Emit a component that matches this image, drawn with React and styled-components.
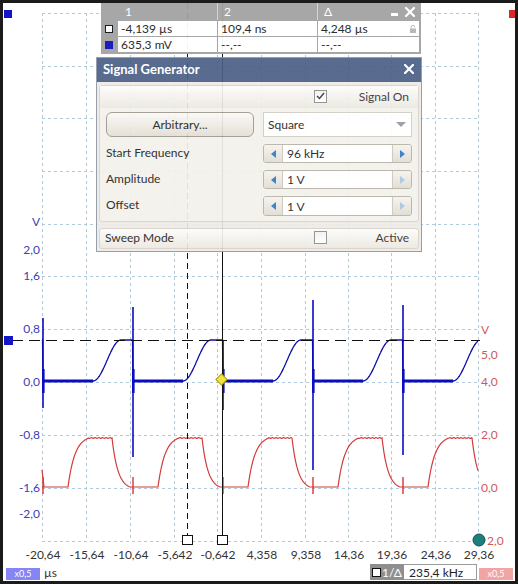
import React from "react";
import styled, { createGlobalStyle } from "styled-components";

const FONT = `Lato, "Open Sans", "Noto Sans", sans-serif`;

const GlobalStyle = createGlobalStyle`
  html, body {
    margin: 0;
    padding: 0;
    background: #fff;
  }
  body {
    font-family: ${FONT};
  }
`;

/* ---------- chart data ---------- */

const GX = [42, 86, 130, 174, 217, 261, 305, 348, 391, 435, 478];
const GY = [13, 66, 118, 171, 224, 276, 329, 382, 435, 488, 541];
const TIME = ["-20,64", "-15,64", "-10,64", "-5,642", "-0,642", "4,358", "9,358", "14,36", "19,36", "24,36", "29,36"];

const BLUE_LABELS = [
  ["V", 222], ["2,0", 250], ["1,6", 276], ["0,8", 329],
  ["0,0", 382], ["-0,8", 435], ["-1,6", 488], ["-2,0", 514],
];
const RED_LABELS = [["V", 330], ["5,0", 355], ["4,0", 382], ["2,0", 435], ["0,0", 488]];

const PERIOD = 90;
const FIRST = 43;
const SPIKES = [
  { x: 43, top: 318, bottom: 408 },
  { x: 133, top: 307, bottom: 457 },
  { x: 223, top: 340, bottom: 410 },
  { x: 313, top: 300, bottom: 470 },
  { x: 403, top: 305, bottom: 455 },
];

const phase = (x) => (((x - FIRST) % PERIOD) + PERIOD) % PERIOD;
const charge = (t) => (1 - Math.exp(-3 * t)) / (1 - Math.exp(-3));

function blueY(x) {
  const p = phase(x);
  if (p < 50) return 381;
  if (p < 78) {
    const t = (p - 50) / 28;
    return 381 - 41 * (0.5 - 0.5 * Math.cos(Math.PI * t));
  }
  return 340;
}

function redY(x) {
  const p = phase(x);
  if (p < 25) return 487;
  if (p < 46) return 487 - 49 * charge((p - 25) / 21);
  if (p < 69) return 438 + Math.sin(x * 1.7) * 0.4;
  if (p < 87) return 438 + 49 * charge((p - 69) / 18);
  return 487;
}

function trace(fn, from, to) {
  let d = "";
  for (let x = from; x <= to; x += 0.5) {
    d += (d ? " L" : "M") + x.toFixed(1) + " " + fn(x).toFixed(1);
  }
  return d;
}

/* ---------- layout ---------- */

const Frame = styled.div`
  position: relative;
  width: 518px;
  height: 584px;
  box-sizing: border-box;
  border: 3px solid #1b1b1b;
  background: #fff;
  display: flex;
  flex-direction: column;
  overflow: hidden;
  font-family: ${FONT};
  font-size: 12px;
  color: #222;
`;

const Plot = styled.svg`
  display: block;
  flex: none;
  font-family: ${FONT};
  font-size: 12px;
`;

const BottomBar = styled.div`
  flex: 1;
  display: flex;
  align-items: center;
  padding: 0 2px 0 3px;
`;

const ScaleBadge = styled.div`
  width: 34px;
  height: 12px;
  margin-top: 3px;
  display: flex;
  align-items: center;
  justify-content: center;
  font-size: 9px;
  color: #fff;
  background: ${(p) => (p.$red ? "#f2a4a4" : "#8585f5")};
`;

const Unit = styled.span`
  margin-left: 4px;
  font-size: 12px;
  color: #333;
`;

const Spacer = styled.div`
  flex: 1;
`;

const FreqLabel = styled.div`
  width: 34px;
  height: 16px;
  display: flex;
  align-items: center;
  justify-content: center;
  gap: 1px;
  background: #8f8f8f;
  color: #fff;
  font-size: 12px;

  i {
    width: 7px;
    height: 7px;
    border: 1px solid #111;
    background: #fff;
  }
`;

const FreqValue = styled.div`
  width: 73px;
  height: 16px;
  box-sizing: border-box;
  border: 1px solid #9a9a9a;
  border-left: none;
  padding-left: 5px;
  display: flex;
  align-items: center;
  font-size: 12px;
  margin-right: 2px;
`;

/* ---------- measurement table ---------- */

const Table = styled.div`
  position: absolute;
  left: 98px;
  top: 0;
  width: 320px;
  box-sizing: border-box;
  padding: 0 2px 2px 0;
  background: #a3a3a3;
  display: grid;
  grid-template-columns: 16px 99px 99px 1fr;
  grid-template-rows: 17px 15px 15px;
  gap: 1px;
  opacity: 0.95;
  font-size: 12px;
`;

const HeadCell = styled.div`
  display: flex;
  align-items: center;
  padding-left: ${(p) => (p.$pad ? p.$pad : 6)}px;
  color: #fff;
  border-left: ${(p) => (p.$sep ? "1px solid #d2d2d2" : "none")};
  margin-left: ${(p) => (p.$sep ? "-1px" : "0")};
`;

const HeadTools = styled.div`
  margin-left: auto;
  display: flex;
  align-items: center;
  gap: 7px;
  padding-right: 4px;
`;

const IconCell = styled.div`
  display: flex;
  align-items: center;
  justify-content: center;
`;

const Swatch = styled.span`
  width: 6px;
  height: 6px;
  border: 1px solid #111;
  background: ${(p) => (p.$fill ? "#1010b8" : "#fff")};
  border-color: ${(p) => (p.$fill ? "#1010b8" : "#111")};
`;

const Cell = styled.div`
  background: #fff;
  display: flex;
  align-items: center;
  padding-left: 3px;
  color: #222;
  white-space: nowrap;
`;

/* ---------- signal generator ---------- */

const Dialog = styled.div`
  position: absolute;
  left: 93px;
  top: 54px;
  width: 326px;
  box-sizing: border-box;
  border: 1px solid #8e97a8;
  background: #eeebe5;
  opacity: 0.92;
  display: flex;
  flex-direction: column;
`;

const TitleBar = styled.div`
  height: 24px;
  background: #4b5f86;
  color: #fff;
  font-weight: 700;
  font-size: 13px;
  display: flex;
  align-items: center;
  justify-content: space-between;
  padding: 0 7px 2px 6px;
  box-sizing: border-box;
`;

const Body = styled.div`
  display: flex;
  flex-direction: column;
  gap: 6px;
  padding: 3px 2px 2px;
`;

const Panel = styled.div`
  border: 1px solid #d7d3cb;
  border-radius: 3px;
  background: #f3f1ec;
`;

const ToggleRow = styled.div`
  height: ${(p) => (p.$sweep ? 21 : 22)}px;
  box-sizing: border-box;
  display: flex;
  align-items: center;
  padding: 0 9px 2px 5px;
  background: linear-gradient(#fdfcfa, #ece8e0);
  border: ${(p) => (p.$sweep ? "1px solid #d7d3cb" : "none")};
  border-radius: ${(p) => (p.$sweep ? "3px" : "0")};
`;

const ToggleGroup = styled.div`
  margin-left: auto;
  display: flex;
  align-items: center;
`;

const Check = styled.span`
  width: 11px;
  height: 11px;
  border: 1px solid #8d8d8d;
  background: linear-gradient(#f2f2f2, #fff);
  display: flex;
  align-items: center;
  justify-content: center;
`;

const ToggleText = styled.span`
  width: 82px;
  text-align: right;
  font-size: 12px;
  color: #333;
`;

const Controls = styled.div`
  display: grid;
  grid-template-columns: 148px 149px;
  grid-template-rows: 25px 19px 19px 20px;
  column-gap: 9px;
  row-gap: 7px;
  align-items: center;
  padding: 4px 6px 5px;
`;

const Button = styled.div`
  height: 25px;
  box-sizing: border-box;
  border: 1px solid #9d988e;
  border-radius: 6px;
  background: linear-gradient(#fbf9f6, #e3ded4);
  display: flex;
  align-items: center;
  justify-content: center;
  color: #222;
`;

const Select = styled.div`
  height: 25px;
  box-sizing: border-box;
  border: 1px solid #d0ccc5;
  background: #fff;
  display: flex;
  align-items: center;
  justify-content: space-between;
  padding: 0 5px 0 4px;
  color: #222;
`;

const Caret = styled.span`
  width: 0;
  height: 0;
  border-left: 5px solid transparent;
  border-right: 5px solid transparent;
  border-top: 5px solid #9a9a9a;
`;

const FieldLabel = styled.div`
  color: #222;
  margin-top: -3px;
`;

const Spinner = styled.div`
  height: 100%;
  box-sizing: border-box;
  border: 1px solid #b7b2a8;
  border-radius: 3px;
  display: grid;
  grid-template-columns: 18px 1fr 18px;
  overflow: hidden;
`;

const SpinButton = styled.div`
  background: linear-gradient(#f6f3ee, #e1dcd2);
  display: flex;
  align-items: center;
  justify-content: center;
`;

const Arrow = styled.span`
  width: 0;
  height: 0;
  border-top: 4.5px solid transparent;
  border-bottom: 4.5px solid transparent;
  border-${(p) => (p.$dir === "left" ? "right" : "left")}: 5px solid
    ${(p) => (p.$dim ? "#a9c6e2" : "#2f79c6")};
`;

const SpinValue = styled.div`
  background: #fff;
  border-left: 1px solid #ccc7bd;
  border-right: 1px solid #ccc7bd;
  display: flex;
  align-items: center;
  padding-left: 4px;
  color: #222;
`;

/* ---------- pieces ---------- */

const CloseIcon = ({ size = 10, color = "#fff" }) => (
  <svg width={size} height={size} viewBox="0 0 10 10">
    <path d="M1 1 L9 9 M9 1 L1 9" stroke={color} strokeWidth="2.2" strokeLinecap="square" />
  </svg>
);

const LockIcon = () => (
  <svg width="6" height="8" viewBox="0 0 6 8" style={{ marginLeft: "auto", marginRight: 3 }}>
    <path d="M1.2 3.5 V2.2 A1.8 1.8 0 0 1 4.8 2.2" stroke="#b5b5b5" strokeWidth="1" fill="none" />
    <rect x="0" y="3.5" width="6" height="4.5" fill="#b5b5b5" />
  </svg>
);

const SpinBox = ({ value, dimRight }) => (
  <Spinner>
    <SpinButton>
      <Arrow $dir="left" />
    </SpinButton>
    <SpinValue>{value}</SpinValue>
    <SpinButton>
      <Arrow $dir="right" $dim={dimRight} />
    </SpinButton>
  </Spinner>
);

const CheckBox = ({ checked }) => (
  <Check>
    {checked && (
      <svg width="9" height="8" viewBox="0 0 9 8">
        <path d="M1 4 L3.5 6.5 L8 1" stroke="#333" strokeWidth="1.4" fill="none" />
      </svg>
    )}
  </Check>
);

const Chart = () => {
  const blue = trace(blueY, 42, 478);
  const red = trace(redY, 42, 478);
  const grid = "#afcadb";

  return (
    <Plot viewBox="3 3 512 560" width="512" height="560">
      <rect x="3" y="3" width="512" height="560" fill="#fff" />

      {GX.map((x) => (
        <line key={"gx" + x} x1={x + 0.5} y1={GY[0]} x2={x + 0.5} y2={GY[10]} stroke={grid} strokeDasharray="3 3" />
      ))}
      {GY.map((y) => (
        <line key={"gy" + y} x1={GX[0]} y1={y + 0.5} x2={GX[10]} y2={y + 0.5} stroke={grid} strokeDasharray="3 3" />
      ))}

      {BLUE_LABELS.map(([t, y]) => (
        <text key={"b" + t + y} x="40" y={y + 4} textAnchor="end" fill="#3d3db3">{t}</text>
      ))}
      {RED_LABELS.map(([t, y]) => (
        <text key={"r" + t + y} x="481" y={y + 4} fill="#cf5858">{t}</text>
      ))}
      <text x="487" y="545" fill="#cf5858">2,0</text>

      {TIME.map((t, i) => (
        <text key={t} x={GX[i] + 1} y="559" textAnchor="middle" fill="#333">{t}</text>
      ))}

      {/* red channel */}
      <path d={red} stroke="#d23b3b" strokeWidth="1.2" fill="none" />
      {SPIKES.map((s) => (
        <line key={"rs" + s.x} x1={s.x} y1="477" x2={s.x} y2="494" stroke="#e03030" strokeWidth="1.4" />
      ))}
      <line x1="42" y1="470" x2="44" y2="487" stroke="#d23b3b" strokeWidth="1.2" />

      {/* blue channel */}
      <path d={blue} stroke="#0c0ca8" strokeWidth="1.3" fill="none" />
      {SPIKES.map((s) => (
        <g key={"bs" + s.x}>
          <line x1={s.x} y1={381} x2={s.x + 50} y2={381} stroke="#0c0cb8" strokeWidth="3" />
          <line x1={s.x} y1={s.top} x2={s.x} y2={s.bottom} stroke="#0c0cc0" strokeWidth="1.6" />
          <rect x={s.x - 1} y="369" width="2.6" height="24" fill="#0c0cc0" />
        </g>
      ))}

      {/* cursors */}
      <line x1="12" y1="340.5" x2="480" y2="340.5" stroke="#111" strokeDasharray="11 6" />
      <line x1="187.5" y1="3" x2="187.5" y2="535" stroke="#111" strokeDasharray="6 4" />
      <line x1="222.5" y1="3" x2="222.5" y2="535" stroke="#111" />
      <rect x="182.5" y="535.5" width="10" height="9" fill="#fff" stroke="#111" />
      <rect x="217.5" y="535.5" width="10" height="9" fill="#fff" stroke="#111" />
      <rect x="217.5" y="375.5" width="8" height="8" fill="#f2e33c" stroke="#a59b1a" transform="rotate(45 221.5 379.5)" />

      {/* channel markers */}
      <rect x="4" y="10" width="8" height="8" fill="#1414c8" />
      <rect x="4" y="336" width="9" height="9" fill="#1414c8" />
      <rect x="509" y="10" width="8" height="8" fill="#e02424" />
      <circle cx="479" cy="540" r="6" fill="#1d7f7d" stroke="#12504f" />
    </Plot>
  );
};

const MeasureTable = () => (
  <Table>
    <div />
    <HeadCell $pad={7}>1</HeadCell>
    <HeadCell $sep>2</HeadCell>
    <HeadCell $sep>
      Δ
      <HeadTools>
        <svg width="7" height="4" viewBox="0 0 7 4" style={{ marginTop: 6 }}>
          <rect width="7" height="3" fill="#fff" />
        </svg>
        <CloseIcon size={10} />
      </HeadTools>
    </HeadCell>

    <IconCell>
      <Swatch />
    </IconCell>
    <Cell>-4,139 µs</Cell>
    <Cell>109,4 ns</Cell>
    <Cell>
      4,248 µs
      <LockIcon />
    </Cell>

    <IconCell>
      <Swatch $fill />
    </IconCell>
    <Cell>635,3 mV</Cell>
    <Cell>--,--</Cell>
    <Cell>--,--</Cell>
  </Table>
);

const SignalGenerator = () => (
  <Dialog>
    <TitleBar>
      Signal Generator
      <CloseIcon size={10} />
    </TitleBar>
    <Body>
      <Panel>
        <ToggleRow>
          <ToggleGroup>
            <CheckBox checked />
            <ToggleText>Signal On</ToggleText>
          </ToggleGroup>
        </ToggleRow>
        <Controls>
          <Button>Arbitrary...</Button>
          <Select>
            Square
            <Caret />
          </Select>
          <FieldLabel>Start Frequency</FieldLabel>
          <SpinBox value="96 kHz" />
          <FieldLabel>Amplitude</FieldLabel>
          <SpinBox value="1 V" dimRight />
          <FieldLabel>Offset</FieldLabel>
          <SpinBox value="1 V" dimRight />
        </Controls>
      </Panel>
      <ToggleRow $sweep>
        Sweep Mode
        <ToggleGroup>
          <CheckBox />
          <ToggleText>Active</ToggleText>
        </ToggleGroup>
      </ToggleRow>
    </Body>
  </Dialog>
);

export default function App() {
  return (
    <>
      <GlobalStyle />
      <Frame>
        <Chart />
        <BottomBar>
          <ScaleBadge>x0,5</ScaleBadge>
          <Unit>µs</Unit>
          <Spacer />
          <FreqLabel>
            <i />
            1/Δ
          </FreqLabel>
          <FreqValue>235,4 kHz</FreqValue>
          <ScaleBadge $red>x0,5</ScaleBadge>
        </BottomBar>
        <MeasureTable />
        <SignalGenerator />
      </Frame>
    </>
  );
}
